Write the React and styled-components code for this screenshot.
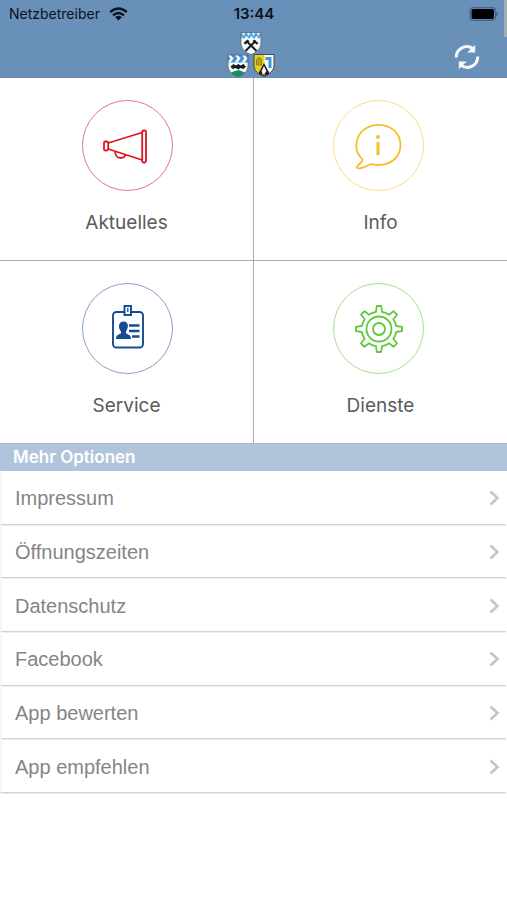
import React from "react";
import styled, { createGlobalStyle } from "styled-components";

const GlobalStyle = createGlobalStyle`
  * { box-sizing: border-box; }
  body { margin: 0; background: #fff; font-family: Inter, "Liberation Sans", sans-serif; }
`;

const Page = styled.div`
  position: relative;
  min-height: 100vh;
  background: #fff;
`;

const ScrollThumb = styled.div`
  position: absolute;
  top: 0;
  right: 0;
  width: 3px;
  height: 37px;
  background: #a5acb3;
`;

const Header = styled.header`
  background: #6990b9;
  color: #0b121b;
`;

const StatusBar = styled.div`
  display: grid;
  grid-template-columns: 1fr auto 1fr;
  align-items: center;
  height: 28px;
  padding: 0 8px 0 9px;
  font-size: 14px;
  line-height: 18px;
`;

const Carrier = styled.div`
  display: flex;
  align-items: center;
  gap: 9px;
`;

const Clock = styled.time`
  font-size: 15px;
  font-weight: 600;
`;

const Battery = styled.div`
  display: flex;
  justify-content: flex-end;
`;

const NavBar = styled.div`
  display: grid;
  grid-template-columns: 1fr auto 1fr;
  align-items: center;
  height: 50px;
  padding: 0 27px;
`;

const Crests = styled.svg`
  grid-column: 2;
  display: block;
  margin: 3px 5px 0 0;
`;

const RefreshButton = styled.button`
  grid-column: 3;
  justify-self: end;
  padding: 0;
  margin-top: 7px;
  border: 0;
  background: none;
  cursor: pointer;
`;

const Icon = styled.svg`
  display: block;
  fill: none;
  stroke: currentColor;
`;

const Tiles = styled.nav`
  display: grid;
  grid-template-columns: 1fr 1fr;
  gap: 1px;
  background: #adadad;
  border-bottom: 1px solid #b2b5b9;
`;

const Ring = styled.span`
  display: grid;
  place-items: center;
  width: 91px;
  height: 91px;
  border: 1px solid ${(p) => p.$ring};
  border-radius: 50%;
  color: ${(p) => p.$ink};
`;

const Tile = styled.a`
  display: flex;
  flex-direction: column;
  align-items: center;
  gap: 18px;
  padding: 22px 0 23px;
  background: #fff;
  color: #5b5b5b;
  font-size: 19px;
  line-height: 28px;
  text-decoration: none;

  &:nth-child(odd) ${Ring} { margin-left: 2px; }
  &:nth-child(even) ${Ring} { margin-right: 4px; }
`;

const SectionTitle = styled.h2`
  margin: 0;
  padding: 0 13px;
  background: #b0c5dc;
  color: #fff;
  font-size: 17px;
  font-weight: 600;
  line-height: 27px;
`;

const OptionList = styled.ul`
  display: grid;
  grid-auto-rows: 1fr;
  min-height: 322px;
  margin: 0;
  padding: 0 1px 0 0;
  list-style: none;
`;

const OptionItem = styled.li`
  display: flex;
  border-left: 2px solid #f6f6f6;
  border-bottom: 1px solid #d2d2d2;
  box-shadow: 0 1px 0 #ededed;
`;

const OptionLink = styled.a`
  flex: 1;
  display: flex;
  align-items: center;
  justify-content: space-between;
  padding: 2px 6px 0 13px;
  color: #858585;
  font-family: "Liberation Sans", Arial, sans-serif;
  font-size: 20px;
  line-height: 24px;
  text-decoration: none;
`;

const Chevron = styled(Icon)`
  color: #c4c4c4;
`;

const shield = "M0.5 0.5H20.5V11C20.5 17 16 20.5 10.5 22.5C5 20.5 0.5 17 0.5 11Z";

function TownCrests() {
  return (
    <Crests width="48" height="46" viewBox="0 0 48 46" role="img" aria-label="Wappen">
      <defs>
        <clipPath id="shield"><path d={shield} /></clipPath>
      </defs>
      <g transform="translate(13.5 0)">
        <g clipPath="url(#shield)">
          <rect width="21" height="23" fill="#f7fafb" />
          <path d="M0 0H21V4L18.5 7L16 4L13.5 7L11 4L8.500 7L6 4L3 7L0 4Z" fill="#5aa9df" />
          <path d="M1 0L3 4L5 0ZM6 0L8 4L10 0ZM11 0L13 4L15 0ZM16 0L18 4L20 0Z" fill="#eef8fd" />
          <path d="M5 19L15 9M16 19L6 9" stroke="#171b20" strokeWidth="2" />
          <path d="M3 11L7 7.500L9 9L5 12.500ZM12 9L14 7.500L18 11.500L16 12.500Z" fill="#171b20" />
        </g>
        <path d={shield} fill="none" stroke="#506477" strokeWidth="0.8" />
      </g>
      <g transform="translate(0.5 22.500)">
        <g clipPath="url(#shield)">
          <rect width="21" height="23" fill="#f7fafb" />
          <rect width="21" height="8" fill="#3f97d4" />
          <path d="M0 0L3 4H6L3 0ZM7 0L10 4H13L10 0ZM14 0L17 4H20L17 0ZM3 4L0 8H3L6 4ZM10 4L7 8H10L13 4ZM17 4L14 8H17L20 4Z" fill="#f7fafb" />
          <path d="M3 12L6 9.500L8 11L11 9.500L13 11L16 9.500L18.500 12L16 14.500L13 13.500L11 15L8 13.500L5 14.500Z" fill="#171b20" />
          <path d="M2 23V19L6 17L11 15.500L15 17L20 19V23Z" fill="#16905d" />
        </g>
        <path d={shield} fill="none" stroke="#506477" strokeWidth="0.8" />
      </g>
      <g transform="translate(26.500 22)">
        <g clipPath="url(#shield)">
          <rect width="21" height="23" fill="#f7fafb" />
          <path d="M0 0H11V12L6 23H0Z" fill="#e5d11e" />
          <path d="M3 11V6Q5.500 1 8 6V11Z" fill="#b89d18" stroke="#7c7a2b" strokeWidth="0.8" />
          <path d="M12 3H18V14H15V6H12Z" fill="#3f97d4" />
          <path d="M10.500 9L18 23H3Z" fill="#171b20" />
          <path d="M10.500 12L13 17L11 20H9L8 17Z" fill="#f1f1f1" />
          <path d="M8 20H12V22H8Z" fill="#b84c2d" />
        </g>
        <path d={shield} fill="none" stroke="#34404b" strokeWidth="0.9" />
      </g>
    </Crests>
  );
}

function WifiIcon() {
  return (
    <Icon width="19" height="14" viewBox="0 0 19 14" strokeWidth="2.4" aria-hidden="true">
      <path d="M1.200 5Q9.500 -2 17.800 5" />
      <path d="M4 8.300Q9.500 3.500 15 8.300" />
      <path d="M6.200 10.200Q9.500 7.500 12.800 10.200L9.500 13.500Z" fill="currentColor" stroke="none" />
    </Icon>
  );
}

function BatteryIcon() {
  return (
    <Icon width="30" height="14" viewBox="0 0 30 14" role="img" aria-label="Akku voll">
      <rect x="1" y="0.700" width="25.500" height="12.600" rx="3.500" stroke="#42668b" strokeWidth="1.200" />
      <rect x="2.500" y="2" width="22.500" height="10" rx="2" fill="#000" stroke="none" />
      <path d="M27.500 4.500Q30 7 27.500 9.500Z" fill="#365778" stroke="none" />
    </Icon>
  );
}

function RefreshIcon() {
  return (
    <Icon width="26" height="26" viewBox="0 0 26 26" color="#f4f8fc" strokeWidth="3" aria-hidden="true">
      <path d="M2.300 13.500A10.500 10.500 0 0 1 19 4.700" />
      <path d="M23.700 12.500A10.500 10.500 0 0 1 7 21.300" />
      <path d="M21.200 0.800V8.500H13.200Z" fill="currentColor" stroke="none" />
      <path d="M4.800 25.200V17.500H12.800Z" fill="currentColor" stroke="none" />
    </Icon>
  );
}

function MegaphoneIcon() {
  return (
    <Icon width="50" height="50" viewBox="2 0 50 50" strokeWidth="1.800" strokeLinejoin="round" aria-hidden="true">
      <rect x="3" y="20.500" width="4.200" height="9" rx="1.500" />
      <rect x="41.200" y="9.500" width="3.800" height="32" rx="1.500" />
      <path d="M7.200 22L41.200 11.500M7.200 28L41.200 39" />
      <path d="M14.200 30.500C14 34 16 37 19.500 37C22.500 37 24 35.500 24.500 33.800" />
    </Icon>
  );
}

function InfoIcon() {
  return (
    <Icon width="50" height="50" viewBox="1 1 50 50" strokeWidth="1.800" strokeLinejoin="round" aria-hidden="true">
      <path d="M9.300 39C5.500 35.500 3.300 31 3.300 26C3.300 13.500 13 4.800 25.500 4.800C38.500 4.800 47.500 13.500 47.500 25C47.500 37 38 45 25.500 45C22 45 19.500 44.500 17 44.200C13 46.500 8.500 48.800 4.800 48.200C2.700 47.800 4 46.500 6 44.500C9 41.500 10.500 40 9.300 39Z" />
      <path d="M25 22V35" strokeWidth="3" />
      <circle cx="25" cy="17" r="1.900" fill="currentColor" stroke="none" />
    </Icon>
  );
}

function BadgeIcon() {
  return (
    <Icon width="50" height="50" viewBox="0 3 50 50" strokeWidth="1.900" aria-hidden="true">
      <rect x="10" y="11" width="30" height="35.500" rx="3.500" />
      <rect x="21.500" y="5" width="6.500" height="9" fill="#fff" />
      <path d="M24.800 7V11" strokeWidth="1.300" />
      <path d="M20.500 20.500C24 20.500 25.300 23 24.800 26C24.500 28 23.500 29.500 23 30.500V32.500C25.500 33.500 28 34 28 38H13C13 34 15.500 33.500 18 32.500V30.500C16.500 29 16 27 16 25C16 22 18 20.500 20.500 20.500Z" fill="currentColor" stroke="none" />
      <path d="M26 24.500H36.500M26 30H36.500M29 35.500H36.500" strokeWidth="2.500" />
    </Icon>
  );
}

function GearIcon() {
  return (
    <Icon width="50" height="50" viewBox="0 0 50 50" strokeWidth="1.800" strokeLinejoin="round" aria-hidden="true">
      <path d="M22 8L22.800 2H27.200L28 8Q32 8.500 35 10.700L39.500 7.200L43 10.700L39.300 15.300Q41.500 18.500 42.200 22L48 22.800V27.200L42.200 28Q41.500 32 39.300 34.700L43 39.300L39.500 42.800L35 39.300Q32 41.500 28 42.200L27.200 48H22.800L22 42.200Q18 41.500 15 39.300L10.500 42.800L7 39.300L10.700 34.700Q8.500 32 7.800 28L2 27.200V22.800L7.800 22Q8.500 18.500 10.700 15.300L7 10.700L10.500 7.200L15 10.700Q18 8.500 22 8Z" />
      <circle cx="25" cy="25" r="12.500" />
      <circle cx="25" cy="25" r="6" />
    </Icon>
  );
}

const tiles = [
  { label: "Aktuelles", icon: MegaphoneIcon, ink: "#dc171d", ring: "#e7777c" },
  { label: "Info", icon: InfoIcon, ink: "#f6bd27", ring: "#fadc83" },
  { label: "Service", icon: BadgeIcon, ink: "#144b91", ring: "#84a0cc" },
  { label: "Dienste", icon: GearIcon, ink: "#60c83d", ring: "#a7e18f" },
];

const options = ["Impressum", "Öffnungszeiten", "Datenschutz", "Facebook", "App bewerten", "App empfehlen"];

export default function App() {
  return (
    <Page>
      <GlobalStyle />
      <Header>
        <StatusBar>
          <Carrier>Netzbetreiber <WifiIcon /></Carrier>
          <Clock>13:44</Clock>
          <Battery><BatteryIcon /></Battery>
        </StatusBar>
        <NavBar>
          <TownCrests />
          <RefreshButton type="button" aria-label="Aktualisieren"><RefreshIcon /></RefreshButton>
        </NavBar>
      </Header>
      <main>
        <Tiles>
          {tiles.map(({ label, icon: TileIcon, ink, ring }) => (
            <Tile key={label} href="#">
              <Ring $ink={ink} $ring={ring}><TileIcon /></Ring>
              <span>{label}</span>
            </Tile>
          ))}
        </Tiles>
        <SectionTitle>Mehr Optionen</SectionTitle>
        <OptionList>
          {options.map((label) => (
            <OptionItem key={label}>
              <OptionLink href="#">
                {label}
                <Chevron width="11" height="16" viewBox="0 0 11 16" strokeWidth="2.500" aria-hidden="true">
                  <path d="M1.500 1.500L8.500 8L1.500 14.500" />
                </Chevron>
              </OptionLink>
            </OptionItem>
          ))}
        </OptionList>
      </main>
      <ScrollThumb />
    </Page>
  );
}
